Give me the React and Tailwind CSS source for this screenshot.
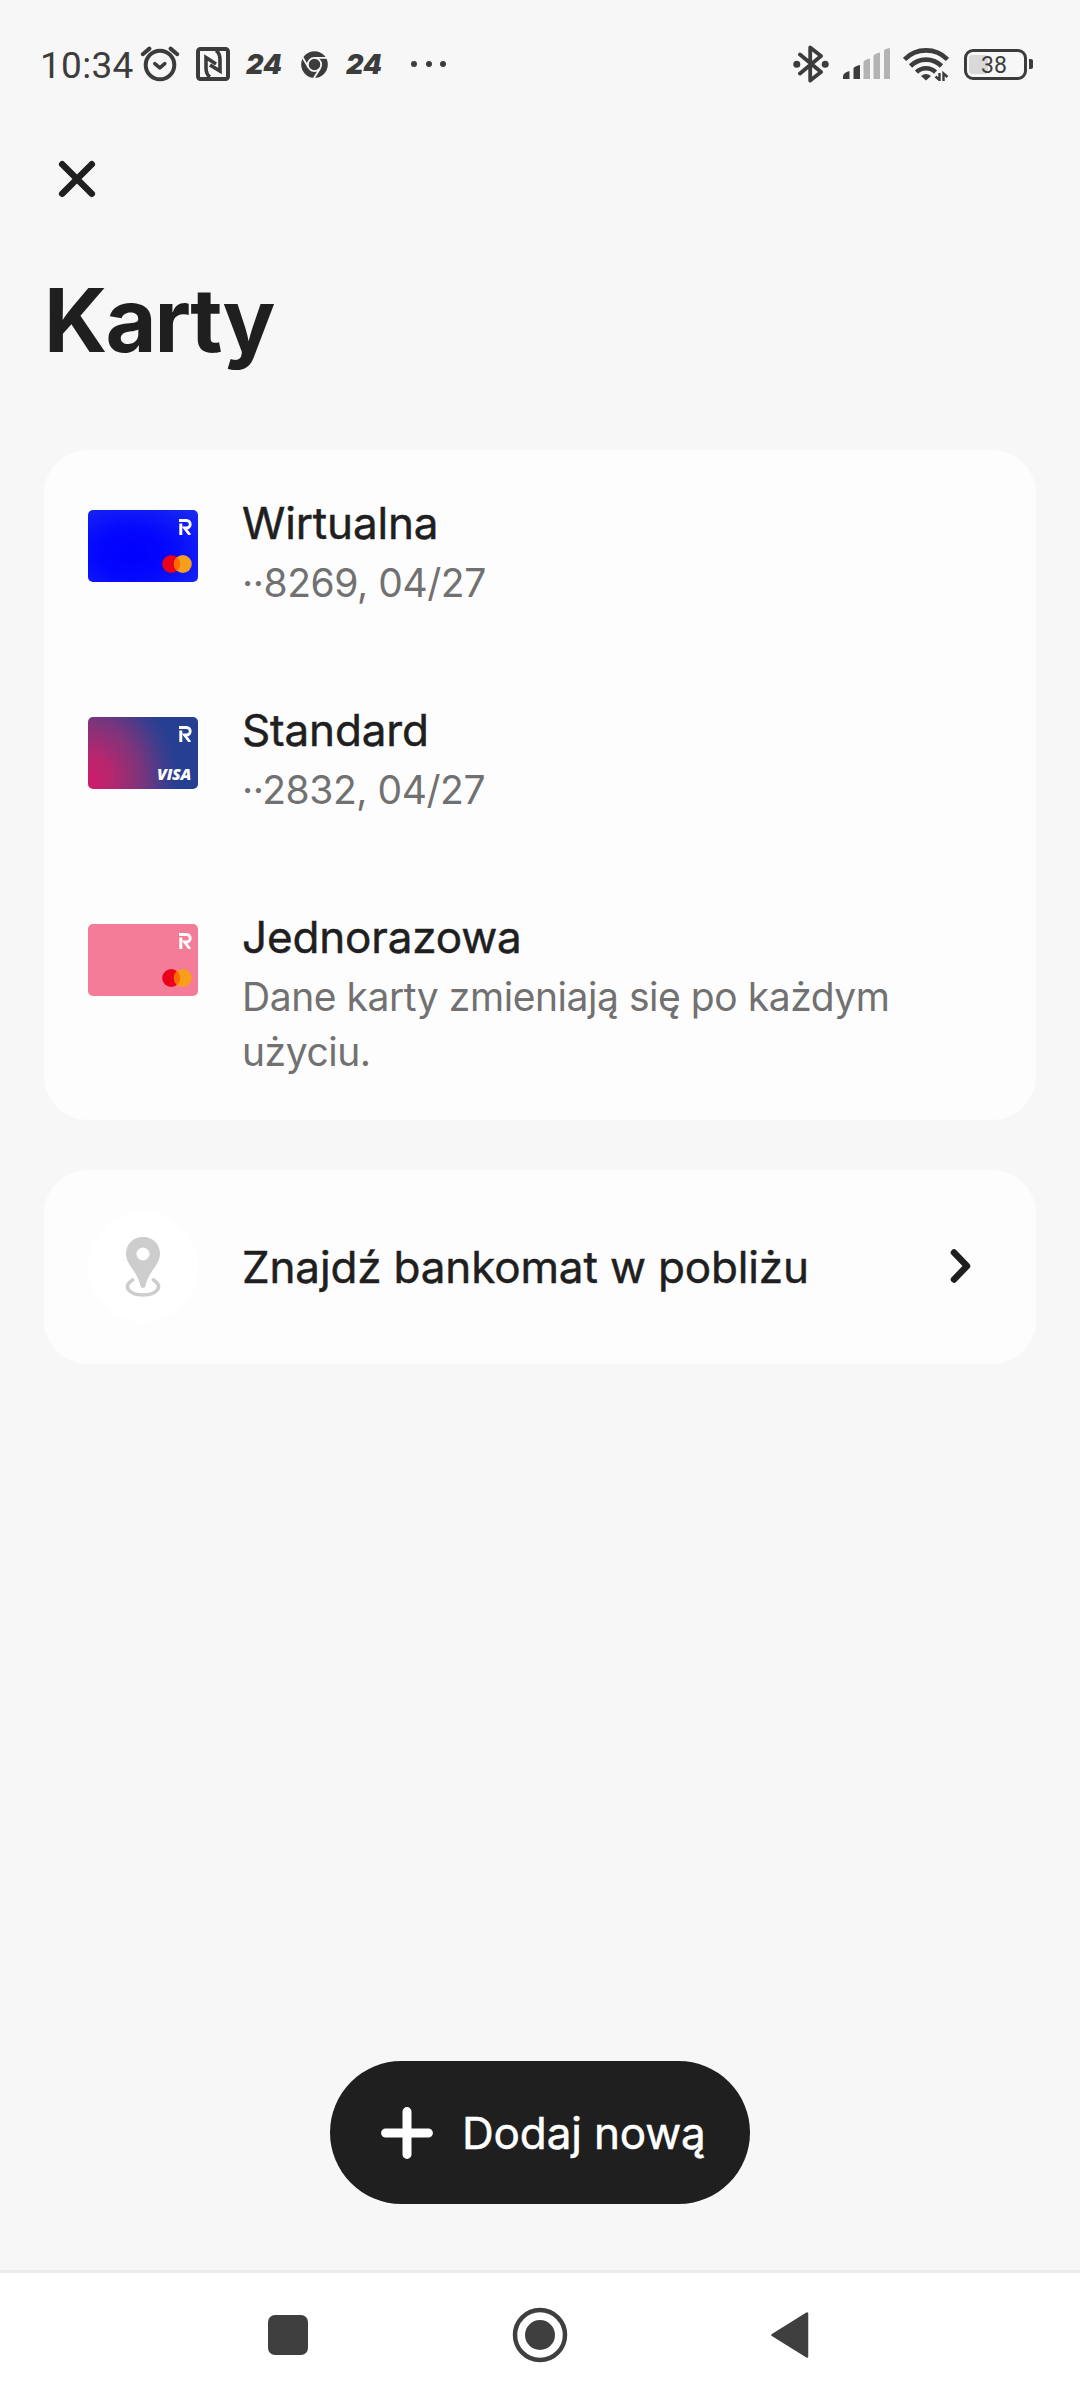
const cards = [
  { name: "Wirtualna", details: "··8269, 04/27", tone: "blue", brand: "mastercard" },
  { name: "Standard", details: "··2832, 04/27", tone: "purple", brand: "visa" },
  {
    name: "Jednorazowa",
    details: "Dane karty zmieniają się po każdym użyciu.",
    tone: "pink",
    brand: "mastercard",
  },
];

const tones = {
  blue: "bg-[radial-gradient(ellipse_at_40%_60%,#0000ff_0%,#0408fd_40%,#1c2df0_100%)]",
  purple:
    "bg-[radial-gradient(ellipse_90px_100px_at_0%_88%,#cf1b6b_0%,#b8266e_25%,#7a357c_60%,#3f3d8d_85%,#263f92_100%)]",
  pink: "bg-[#f37c98]",
};

// Inter has no cut between regular and medium, so the labels get a hairline stroke
const label = "text-[44px] font-normal tracking-[-0.15px] [-webkit-text-stroke:0.5px_currentColor]";

function AlarmIcon() {
  return (
    <svg width="40" height="38" viewBox="0 0 40 38" fill="none" stroke="#3c3c3c" strokeLinecap="round">
      <circle cx="20" cy="20" r="14.3" strokeWidth="4" />
      <path d="M14.8 18.6l5 4.2 5-4.2" strokeWidth="3.6" strokeLinejoin="round" />
      <path d="M2.8 9.2l6.6-5.6M37.2 9.2l-6.6-5.6" strokeWidth="4" />
    </svg>
  );
}

function NfcIcon() {
  return (
    <svg width="34" height="34" viewBox="0 0 34 34" fill="none" stroke="#3c3c3c" strokeWidth="4">
      <rect x="2" y="2" width="30" height="30" rx="2.5" />
      <path d="M14 30c-3-2-4-5-4-9V10.5l10 6.5" strokeWidth="3.6" />
      <path d="M20 3.5c3 2 4 5 4 9V24l-10-6" strokeWidth="3.6" />
    </svg>
  );
}

function ChromeIcon() {
  return (
    <svg width="27" height="27" viewBox="0 0 27 27">
      <circle cx="13.5" cy="13.5" r="13.3" fill="#3c3c3c" />
      <g fill="none" stroke="#f7f7f7" strokeWidth="1.8">
        <circle cx="13.5" cy="13.5" r="6.7" />
        <path d="M13.5 6.8H26M7.7 16.9L1.2 5.8M19.3 16.9L13 27" />
      </g>
    </svg>
  );
}

function BluetoothIcon() {
  return (
    <svg width="36" height="38" viewBox="0 0 36 38" fill="none" stroke="#3c3c3c" strokeWidth="3.8">
      <path d="M7 9.5l21 17.5-10.8 8.5V2.5L28 11 7 28.5" strokeLinejoin="round" strokeLinecap="round" />
      <circle cx="3.8" cy="19.3" r="3.5" fill="#3c3c3c" stroke="none" />
      <circle cx="32.2" cy="19.3" r="3.5" fill="#3c3c3c" stroke="none" />
    </svg>
  );
}

function SignalIcon() {
  return (
    <svg width="48" height="32" viewBox="0 0 48 32">
      <path d="M0 31v-2.5q0-4 6.5-5.5V31zM10.5 31V20.5q0-2 6.5-3.5v14z" fill="#3c3c3c" />
      <path d="M20.5 31V14q0-2 6.5-3.5V31zM30.5 31V8q0-2 6.5-3.5V31zM41 31V3q0-2 6-3v31z" fill="#b3b3b3" />
    </svg>
  );
}

function WifiIcon() {
  return (
    <svg width="46" height="34" viewBox="0 0 46 34" fill="none" stroke="#3c3c3c" strokeWidth="4.6">
      <path d="M1.5 12.5a30 30 0 0 1 43 0" />
      <path d="M7.5 19a22 22 0 0 1 31 0" />
      <path d="M13.5 25.2a13.5 13.5 0 0 1 19 0" />
      <path d="M18 29q5-4 10 0l-5 4.5z" fill="#3c3c3c" stroke="none" />
      <path d="M36.5 26v7l-4-3.5M40.5 34v-7.5l4 3.5" strokeWidth="2.4" />
    </svg>
  );
}

function Battery({ level }) {
  return (
    <div className="flex items-center gap-[2px]">
      <div className="flex h-[31px] w-[63px] items-center rounded-[9px] border-[3.5px] border-[#3c3c3c] p-[2px]">
        <div className="flex h-[19px] w-[19px] items-center rounded-[3px] bg-[#d9d9d9]">
          <span className="mt-[2px] ml-[12px] font-['Roboto',sans-serif] text-[23px] leading-none text-[#3c3c3c]">
            {level}
          </span>
        </div>
      </div>
      <div className="h-[10px] w-[4px] rounded-r-[2px] bg-[#3c3c3c]" />
    </div>
  );
}

function StatusBar() {
  return (
    <div className="flex h-[128px] items-start justify-between pr-[47px] pl-[40px] text-[#3c3c3c]">
      <div className="flex h-[128px] items-center">
        <span className="mt-[3px] w-[100px] font-['Roboto',sans-serif] text-[37px] leading-[42px] tracking-[0.3px]">
          10:34
        </span>
        <AlarmIcon />
        <span className="ml-[16px]"><NfcIcon /></span>
        <span className="ml-[16px] w-[36px] text-[27px] leading-none font-black italic">24</span>
        <span className="ml-[19px]"><ChromeIcon /></span>
        <span className="ml-[18px] w-[36px] text-[27px] leading-none font-black italic">24</span>
        <div className="ml-[29px] flex gap-[8.5px]">
          <i className="size-[6px] rounded-full bg-[#3c3c3c]" />
          <i className="size-[6px] rounded-full bg-[#3c3c3c]" />
          <i className="size-[6px] rounded-full bg-[#3c3c3c]" />
        </div>
      </div>
      <div className="flex h-[128px] items-center">
        <BluetoothIcon />
        <span className="ml-[14px]"><SignalIcon /></span>
        <span className="ml-[12px]"><WifiIcon /></span>
        <span className="ml-[15px]"><Battery level="38" /></span>
      </div>
    </div>
  );
}

function CardThumb({ tone, brand }) {
  return (
    <div
      className={`mt-[19px] flex h-[72px] w-[110px] shrink-0 flex-col items-end justify-between rounded-[5px] pt-[9px] pr-[6px] pb-[9px] ${tones[tone]}`}
    >
      <svg width="13" height="16" viewBox="0 0 13 16" fill="none" stroke="#fff" strokeWidth="3">
        <path d="M1.8 4.5V16" />
        <path d="M0 1.5h7.5a3.6 3.6 0 0 1 0 7.5H5.5l5.5 7" strokeWidth="2.8" />
      </svg>
      {brand === "visa" ? (
        <span className="mr-[1px] font-['Open_Sans',sans-serif] text-[16px] leading-[12px] font-extrabold tracking-[-0.3px] text-white italic">
          VISA
        </span>
      ) : (
        <svg width="30" height="18" viewBox="0 0 30 18">
          <circle cx="9.2" cy="9" r="9" fill="#eb001b" />
          <circle cx="20.8" cy="9" r="9" fill="#f79e1b" />
          <path d="M15 2.1a9 9 0 0 1 0 13.8a9 9 0 0 1 0-13.8" fill="#ff6a00" />
        </svg>
      )}
    </div>
  );
}

function CardRow({ card }) {
  return (
    <div className="flex">
      <CardThumb tone={card.tone} brand={card.brand} />
      <div className="ml-[44px] w-[700px]">
        <div className={`leading-[64px] ${label}`}>{card.name}</div>
        <div className="text-[39px] leading-[55px] tracking-[-0.45px] text-[#717171]">
          {card.details}
        </div>
      </div>
    </div>
  );
}

function PinIcon() {
  return (
    <svg width="36" height="60" viewBox="0 0 36 60" fill="#cdcdcd">
      <path
        fillRule="evenodd"
        d="M18 0C8 0 1 7.5 1 16.5c0 6 3 10.5 6.5 15.5 4 6 6.5 10 8 17 .7 2.5 4.3 2.5 5 0 1.5-7 4-11 8-17 3.5-5 6.5-9.5 6.5-15.5C35 7.5 28 0 18 0zm0 10.5a6.5 6.5 0 1 1 0 13a6.5 6.5 0 0 1 0-13z"
      />
      <path
        d="M7.5 43C-3 49 4 58 18 58S39 49 28.5 43"
        fill="none"
        stroke="#cdcdcd"
        strokeWidth="3.6"
        strokeLinecap="round"
      />
    </svg>
  );
}

function NavBar() {
  return (
    <div className="flex h-[130px] items-center border-t-[3px] border-[#ebebeb] bg-white pb-[3px] pl-[268px] text-[#3f3f3f]">
      <div className="size-[40px] rounded-[7px] bg-[#3f3f3f]" />
      <svg className="ml-[204px]" width="56" height="56" viewBox="0 0 56 56">
        <circle cx="28" cy="28" r="25" fill="none" stroke="currentColor" strokeWidth="4.5" />
        <circle cx="28" cy="28" r="15" fill="currentColor" />
      </svg>
      <svg className="ml-[203px]" width="38" height="46" viewBox="0 0 38 46">
        <path d="M1.5 23L36 1.5v43z" fill="currentColor" stroke="currentColor" strokeWidth="2.5" strokeLinejoin="round" />
      </svg>
    </div>
  );
}

export default function App() {
  return (
    <div className="flex h-[2400px] w-[1080px] flex-col bg-[#f7f7f7] font-['Inter','Liberation_Sans',sans-serif] text-[#1f1f1f]">
      <StatusBar />
      <div className="px-[44px]">
        <svg className="mt-[30px] ml-[12px]" width="42" height="42" viewBox="0 0 42 42">
          <path d="M6.2 6.2l29.6 29.6M35.8 6.2L6.2 35.8" stroke="#1f1f1f" strokeWidth="6.5" strokeLinecap="round" />
        </svg>
        <h1 className="mt-[65px] text-[88px] leading-[110px] font-bold tracking-[-1.9px]">Karty</h1>
        <div className="mt-[75px] flex flex-col gap-[88px] rounded-[44px] bg-[#fdfdfd] px-[44px] py-[41px]">
          {cards.map((card) => (
            <CardRow key={card.name} card={card} />
          ))}
        </div>
        <div className="mt-[50px] flex h-[194px] items-center rounded-[44px] bg-[#fdfdfd] pr-[65px] pl-[44px]">
          <div className="flex size-[110px] items-center justify-center rounded-full bg-white">
            <PinIcon />
          </div>
          <span className={`ml-[44px] leading-[60px] ${label}`}>Znajdź bankomat w pobliżu</span>
          <svg className="mb-[2px] ml-auto" width="22" height="36" viewBox="0 0 22 36" fill="none">
            <path d="M5 4.5L18 18 5 31.5" stroke="#1f1f1f" strokeWidth="6.5" strokeLinecap="round" strokeLinejoin="round" />
          </svg>
        </div>
      </div>
      <button className="mt-auto mb-[66px] flex h-[143px] w-[420px] items-center self-center rounded-full bg-[#1f1f1f] pl-[51px] text-white">
        <svg width="52" height="52" viewBox="0 0 52 52">
          <path d="M26 4.6v42.8M4.6 26h42.8" stroke="#fff" strokeWidth="9" strokeLinecap="round" />
        </svg>
        <span className={`ml-[29px] leading-[60px] ${label}`}>Dodaj nową</span>
      </button>
      <NavBar />
    </div>
  );
}
